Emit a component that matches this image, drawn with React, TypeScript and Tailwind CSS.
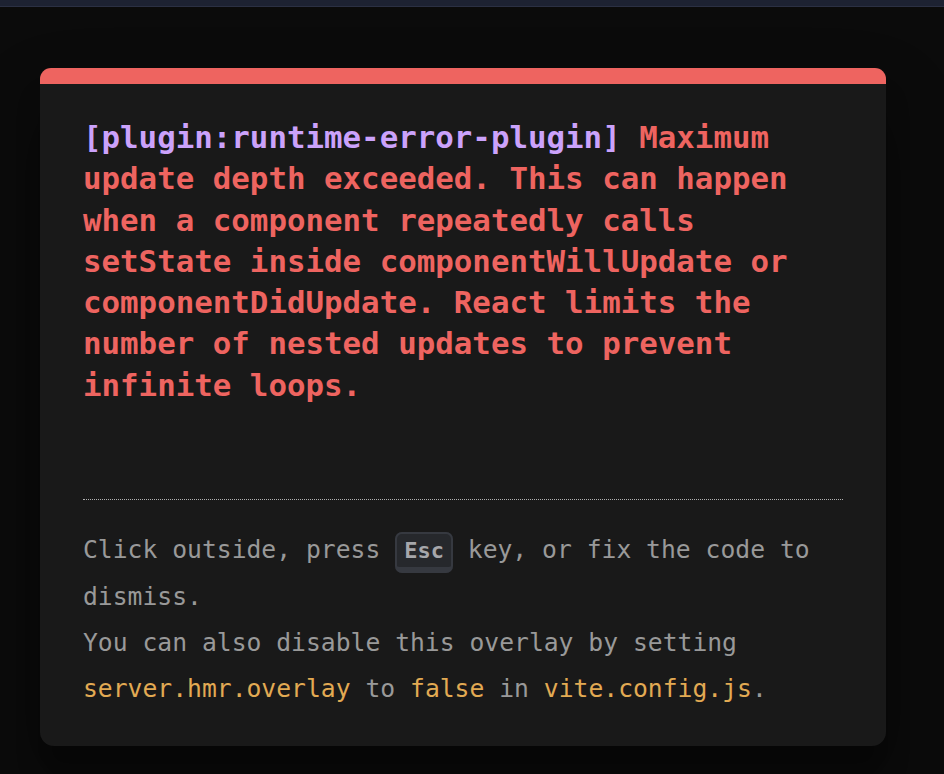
import React from "react";

export default function App() {
  const mono = "font-['DejaVu_Sans_Mono','Liberation_Mono',monospace]";
  return (
    <div className={`h-[774px] overflow-hidden bg-[#0b0b0b] ${mono}`}>
      <div className="h-[7px] border-b border-[#2b3043] bg-[#1d2232]" />
      <div className="ml-[40px] mt-[61px] w-[846px] rounded-t-[11px] rounded-b-[14px] border-t-[16px] border-[#ee6460] bg-[#191919] px-[43px] pt-[33px] pb-[34px] shadow-[0_36px_73px_rgba(0,0,0,0.3),0_29px_23px_rgba(0,0,0,0.22)]">
        <pre
          className={`m-0 whitespace-pre-wrap text-[30.8px] leading-[41.3px] font-semibold text-[#ee6460] ${mono}`}
        >
          <span className="text-[#cba2fb]">[plugin:runtime-error-plugin]</span>{" "}
          Maximum update depth exceeded. This can happen when a component repeatedly calls setState inside componentWillUpdate or componentDidUpdate. React limits the number of nested updates to prevent infinite loops.
        </pre>
        <div className="mt-[93px] border-t border-dotted border-[#b0b0b0] pt-[27px] text-[24.7px] leading-[46px] text-[#999]">
          Click outside, press{" "}
          <kbd
            className={`rounded-[7px] border-[2px] border-b-[6px] border-[#363940] bg-[#26282c] px-[7px] py-[3.7px] text-[22px] font-bold text-[#a6a7ab] ${mono}`}
          >
            Esc
          </kbd>{" "}
          key, or fix the code to dismiss.
          <br />
          You can also disable this overlay by setting{" "}
          <code className={`text-[#e2aa53] ${mono}`}>server.hmr.overlay</code> to{" "}
          <code className={`text-[#e2aa53] ${mono}`}>false</code> in{" "}
          <code className={`text-[#e2aa53] ${mono}`}>vite.config.js</code>.
        </div>
      </div>
    </div>
  );
}
